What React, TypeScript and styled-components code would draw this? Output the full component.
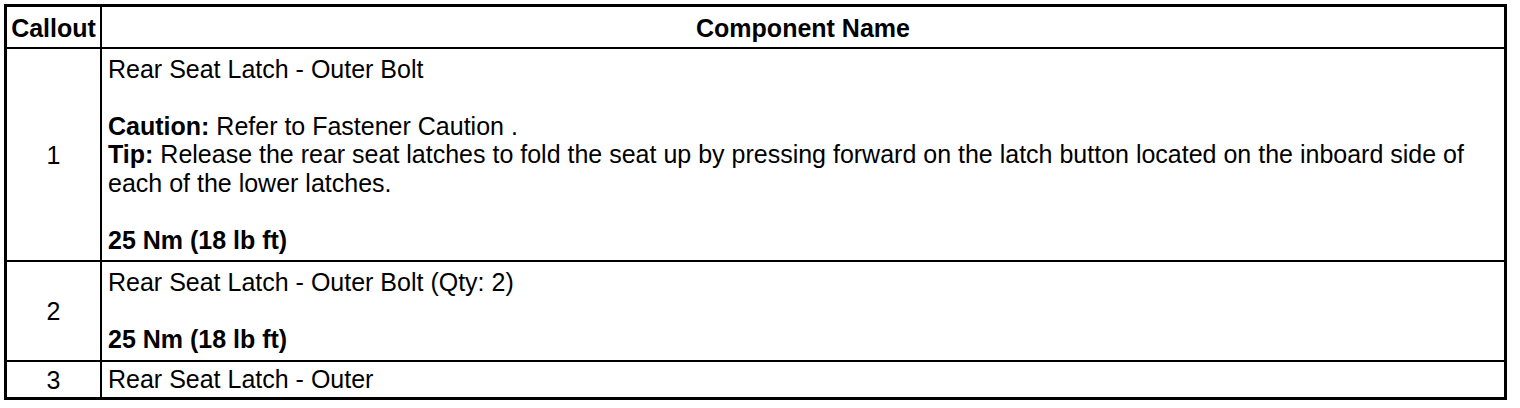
import React from "react";
import styled, { createGlobalStyle } from "styled-components";

const GlobalStyle = createGlobalStyle`
  html, body {
    margin: 0;
    padding: 0;
    background: #ffffff;
  }
  body {
    font-family: "Liberation Sans", Arial, Helvetica, sans-serif;
    color: #000000;
  }
`;

const Page = styled.div`
  padding: 4px 0 0 4px;
`;

const Table = styled.div`
  width: 1503px;
  box-sizing: border-box;
  border: 3px solid #000;
  background: #000;
  display: grid;
  grid-template-columns: 93px 1fr;
  grid-template-rows: 40px 211px 98px 35px;
  column-gap: 2px;
  row-gap: 2px;
`;

const HeaderCell = styled.div`
  background: #fff;
  display: flex;
  align-items: center;
  justify-content: center;
  font-size: 25px;
  font-weight: 700;
  line-height: 28px;
  padding-top: 1px;
`;

const CalloutCell = styled.div`
  background: #fff;
  display: flex;
  align-items: center;
  justify-content: center;
  font-size: 25px;
  line-height: 28px;
`;

const NameCell = styled.div`
  background: #fff;
  display: flex;
  flex-direction: column;
  justify-content: center;
  padding: 0 6px;
  font-size: 25px;
  line-height: 28.4px;
`;

const Line = styled.div<{ $gapBefore?: boolean }>`
  margin-top: ${(p) => (p.$gapBefore ? "28.4px" : "0")};
`;

const Strong = styled.span`
  font-weight: 700;
`;

type Row = {
  callout: string;
  content: React.ReactNode;
};

const rows: Row[] = [
  {
    callout: "1",
    content: (
      <>
        <Line>Rear Seat Latch - Outer Bolt</Line>
        <Line $gapBefore>
          <Strong>Caution:</Strong> Refer to Fastener Caution .
        </Line>
        <Line>
          <Strong>Tip:</Strong> Release the rear seat latches to fold the seat up by pressing
          forward on the latch button located on the inboard side of each of the lower latches.
        </Line>
        <Line $gapBefore>
          <Strong>25 Nm (18 lb ft)</Strong>
        </Line>
      </>
    ),
  },
  {
    callout: "2",
    content: (
      <>
        <Line>Rear Seat Latch - Outer Bolt (Qty: 2)</Line>
        <Line $gapBefore>
          <Strong>25 Nm (18 lb ft)</Strong>
        </Line>
      </>
    ),
  },
  {
    callout: "3",
    content: <Line>Rear Seat Latch - Outer</Line>,
  },
];

export default function App() {
  return (
    <>
      <GlobalStyle />
      <Page>
        <Table>
          <HeaderCell>Callout</HeaderCell>
          <HeaderCell>Component Name</HeaderCell>
          {rows.map((r) => (
            <React.Fragment key={r.callout}>
              <CalloutCell>{r.callout}</CalloutCell>
              <NameCell>{r.content}</NameCell>
            </React.Fragment>
          ))}
        </Table>
      </Page>
    </>
  );
}
